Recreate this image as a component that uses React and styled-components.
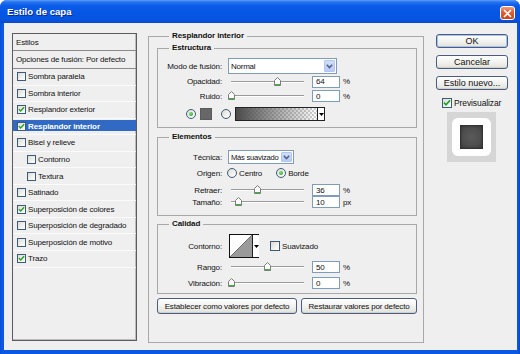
import React from "react";
import styled, { createGlobalStyle } from "styled-components";

const Global = createGlobalStyle`
  html, body { margin: 0; padding: 0; background: #fff; }
  body {
    font-family: "Liberation Sans", Arial, sans-serif;
    font-size: 8px;
    letter-spacing: -0.15px;
    color: #111;
  }
  * { box-sizing: border-box; }
`;

const Window = styled.div`
  width: 520px;
  height: 354px;
  display: flex;
  flex-direction: column;
  background: linear-gradient(90deg, #0a4fd6 0, #0a58e4 2px, #0a58e4 calc(100% - 2px), #0a47c6 100%);
  border-radius: 7px 7px 0 0;
  overflow: hidden;
`;

const TitleBar = styled.div`
  height: 23px;
  flex: none;
  display: flex;
  align-items: center;
  justify-content: space-between;
  padding: 0 5px 0 7px;
  background: linear-gradient(180deg, #5e9ef8 0%, #2673f0 9%, #0a5ce8 25%, #0556e4 55%, #0654e0 85%, #0a48c8 100%);
`;

const Title = styled.span`
  color: #fff;
  font-weight: bold;
  font-size: 9.6px;
  letter-spacing: 0;
  text-shadow: 1px 1px 0 #0a2a8a;
`;

const CloseBtn = styled.div`
  width: 15px;
  height: 14px;
  margin-top: 3px;
  border: 1px solid #fff;
  border-radius: 3px;
  background: linear-gradient(180deg, #ec9f80 0%, #e0603a 40%, #cc4418 100%);
  display: flex;
  align-items: center;
  justify-content: center;
`;

const Frame = styled.div`
  flex: 1;
  margin: 0 3px 4px 4px;
  background: #efefef;
  display: flex;
  align-items: flex-start;
  padding: 10px 0 0 8px;
`;

/* ---------- left list ---------- */
const ListPanel = styled.div`
  width: 125px;
  height: 308px;
  flex: none;
  border: 1px solid #5c5c5c;
  box-shadow: inset -1px -1px 0 #bdbdbd;
  background: #efefef;
  display: flex;
  flex-direction: column;
`;

const ListHeader = styled.div`
  height: ${(p) => p.$h}px;
  flex: none;
  display: flex;
  align-items: center;
  padding-left: 3px;
  border-bottom: 1px solid #8a8a8a;
  white-space: nowrap;
`;

const ListItem = styled.div`
  height: 16.55px;
  flex: none;
  display: flex;
  align-items: center;
  padding-left: ${(p) => (p.$indent ? 14 : 4)}px;
  border-bottom: 1px solid #fbfbfb;
  color: ${(p) => (p.$selected ? "#fff" : "#111")};
  font-weight: ${(p) => (p.$selected ? "bold" : "normal")};
  letter-spacing: ${(p) => (p.$selected ? "-0.1px" : "-0.15px")};
  background: ${(p) =>
    p.$selected
      ? "linear-gradient(180deg, transparent 1px, #316ac5 1px, #316ac5 calc(100% - 3px), transparent calc(100% - 3px))"
      : "transparent"};
`;

const ItemText = styled.span`
  margin-left: ${(p) => p.$ml ?? 1}px;
  white-space: nowrap;
`;

const CheckBox = styled.div`
  width: ${(p) => p.$size}px;
  height: ${(p) => p.$size}px;
  flex: none;
  margin-left: ${(p) => p.$ml || 0}px;
  border: 1px solid #3d5a78;
  background: linear-gradient(135deg, #dcdcd6 0%, #f2f2ee 60%, #ffffff 100%);
  display: flex;
  align-items: center;
  justify-content: center;
`;

const Check = ({ checked, size = 9, ml }) => (
  <CheckBox $size={size} $ml={ml}>
    {checked && (
      <svg width={size - 2} height={size - 2} viewBox="0 0 8 8">
        <polyline points="1,3.6 3,5.8 7,1.4" fill="none" stroke="#21a121" strokeWidth="1.6" />
      </svg>
    )}
  </CheckBox>
);

/* ---------- group boxes ---------- */
const Group = styled.div`
  border: 1px solid #a8a8a8;
  display: flex;
  flex-direction: column;
  flex: none;
  width: ${(p) => (p.$w ? `${p.$w}px` : "auto")};
  height: ${(p) => (p.$h ? `${p.$h}px` : "auto")};
  margin-top: ${(p) => p.$mt || 0}px;
  padding: ${(p) => p.$pad || "0"};
`;

const Legend = styled.div`
  align-self: flex-start;
  height: 10px;
  line-height: 10px;
  margin: -6px 0 0 ${(p) => p.$ml}px;
  padding: 0 3px;
  background: #efefef;
  font-weight: bold;
  letter-spacing: -0.1px;
  color: #111;
`;

const Row = styled.div`
  display: flex;
  align-items: center;
  height: ${(p) => p.$h}px;
  margin-top: ${(p) => p.$mt || 0}px;
  padding-left: ${(p) => p.$pl || 0}px;
  flex: none;
`;

const Label = styled.span`
  width: 64px;
  flex: none;
  text-align: right;
  white-space: nowrap;
`;

const SelectBox = styled.div`
  width: ${(p) => p.$w}px;
  height: ${(p) => p.$h}px;
  margin-left: 6px;
  flex: none;
  border: 1px solid #7f9db9;
  background: #fff;
  display: flex;
  align-items: center;
  justify-content: space-between;
  padding-left: 2px;
`;

const SelectText = styled.span`
  white-space: nowrap;
  font-size: ${(p) => p.$fs || 8}px;
  letter-spacing: -0.25px;
`;

const ArrowBtn = styled.div`
  width: 11px;
  flex: none;
  align-self: stretch;
  margin: 1px;
  border-radius: 1px;
  background: linear-gradient(180deg, #d2def9 0%, #b9cbf5 100%);
  border: 1px solid #b3c5ef;
  display: flex;
  align-items: center;
  justify-content: center;
`;

const Select = ({ value, w, h, fs }) => (
  <SelectBox $w={w} $h={h}>
    <SelectText $fs={fs}>{value}</SelectText>
    <ArrowBtn>
      <svg width="7" height="5" viewBox="0 0 7 5">
        <polyline points="0.8,0.8 3.5,3.6 6.2,0.8" fill="none" stroke="#4d6185" strokeWidth="1.5" />
      </svg>
    </ArrowBtn>
  </SelectBox>
);

const SliderBox = styled.div`
  position: relative;
  width: 73px;
  height: 12px;
  flex: none;
  margin: 0 8px 0 9px;
  &::before {
    content: "";
    position: absolute;
    left: 0;
    right: 0;
    top: 5px;
    height: 1px;
    background: #9a9a9a;
    box-shadow: 0 1px 0 #fff;
  }
`;

const Thumb = styled.svg`
  position: absolute;
  top: 1px;
`;

const Slider = ({ pct }) => (
  <SliderBox>
    <Thumb width="7" height="9" viewBox="0 0 7 9" style={{ left: `calc(${pct}% - 3.5px)` }}>
      <path d="M3.5 0.5 L6.5 3.5 L6.5 8.5 L0.5 8.5 L0.5 3.5 Z" fill="#fbfbfb" stroke="#7c7c7c" strokeWidth="1" />
      <line x1="1" y1="7.5" x2="6" y2="7.5" stroke="#3cb43c" strokeWidth="1" />
    </Thumb>
  </SliderBox>
);

const NumInput = styled.div`
  width: 28px;
  height: 12px;
  flex: none;
  border: 1px solid #7f9db9;
  background: #fff;
  padding-left: 3px;
  display: flex;
  align-items: center;
`;

const Unit = styled.span`
  margin-left: 3px;
`;

const RadioCircle = styled.div`
  width: 10px;
  height: 10px;
  flex: none;
  margin-left: ${(p) => p.$ml || 0}px;
  border-radius: 50%;
  border: 1px solid #3d5a78;
  background: linear-gradient(135deg, #dcdcd6 0%, #f3f3ef 60%, #fff 100%);
  display: flex;
  align-items: center;
  justify-content: center;
  &::after {
    content: "";
    display: ${(p) => (p.$on ? "block" : "none")};
    width: 4px;
    height: 4px;
    border-radius: 50%;
    background: radial-gradient(circle at 35% 35%, #7fe07f, #1c9a1c);
  }
`;

const Swatch = styled.div`
  width: 12px;
  height: 12px;
  flex: none;
  margin-left: 4px;
  background: #676767;
  border: 1px solid #5a5a5a;
`;

const GradBox = styled.div`
  width: 90px;
  height: 14px;
  flex: none;
  margin-left: 4px;
  border: 1px solid #222;
  display: flex;
`;

const GradFill = styled.div`
  flex: 1;
  background: linear-gradient(90deg, #4a4a4a 0%, rgba(90, 90, 90, 0.6) 45%, rgba(120, 120, 120, 0) 100%),
    repeating-conic-gradient(#cfcfcf 0 25%, #ffffff 0 50%) 0 0 / 4px 4px;
`;

const MiniArrow = styled.div`
  width: 7px;
  flex: none;
  border-left: 1px solid #222;
  background: #fff;
  display: flex;
  align-items: center;
  justify-content: center;
`;

const ArrowDown = () => (
  <svg width="5" height="3" viewBox="0 0 5 3">
    <polygon points="0,0 5,0 2.5,3" fill="#000" />
  </svg>
);

const ContourBox = styled.div`
  width: 30px;
  height: 24px;
  flex: none;
  margin-left: 7px;
  border: 1px solid #111;
  background: #fff;
  display: flex;
`;

const ContourPreview = styled.svg`
  flex: none;
`;

const PlainBtn = styled.div`
  height: ${(p) => p.$h || 16}px;
  width: ${(p) => p.$w}px;
  flex: none;
  margin-left: ${(p) => p.$ml || 0}px;
  margin-top: ${(p) => p.$mt || 0}px;
  border: 1px solid #4a5d80;
  border-radius: 3px;
  background: linear-gradient(180deg, #ffffff 0%, #f3f3f1 45%, #e2e2dc 100%);
  box-shadow: ${(p) => (p.$primary ? "inset 0 0 0 1px #a9c3ef" : "inset 0 -1px 0 #d0d0c8")};
  display: flex;
  align-items: center;
  justify-content: center;
  font-size: ${(p) => p.$fs || 8}px;
  letter-spacing: ${(p) => (p.$fs ? "0" : "-0.15px")};
  white-space: nowrap;
`;

const RightCol = styled.div`
  width: 72px;
  flex: none;
  margin: 1px 0 0 12px;
  display: flex;
  flex-direction: column;
`;

const PreviewRow = styled.div`
  display: flex;
  align-items: center;
  height: 11px;
  margin: 7px 0 0 6px;
  font-size: 8.5px;
  letter-spacing: -0.1px;
`;

const PreviewFrame = styled.div`
  width: 49px;
  height: 50px;
  margin: 4px 0 0 11px;
  background: #d6d6d6;
  display: flex;
  align-items: center;
  justify-content: center;
`;

const PreviewTile = styled.div`
  width: 39px;
  height: 38px;
  border-radius: 6px;
  background: #fff;
  display: flex;
  align-items: center;
  justify-content: center;
`;

const PreviewLayer = styled.div`
  width: 23px;
  height: 24px;
  background: radial-gradient(circle, #5a5a5a 0%, #4e4e4e 55%, #3a3a3a 100%);
  box-shadow: inset 0 0 2px 1px #2e2e2e;
`;

const MainCol = styled.div`
  margin: 3px 0 0 11px;
  flex: none;
`;

const listItems = [
  { label: "Sombra paralela" },
  { label: "Sombra interior" },
  { label: "Resplandor exterior", checked: true },
  { label: "Resplandor interior", checked: true, selected: true },
  { label: "Bisel y relieve" },
  { label: "Contorno", indent: true },
  { label: "Textura", indent: true },
  { label: "Satinado" },
  { label: "Superposición de colores", checked: true },
  { label: "Superposición de degradado" },
  { label: "Superposición de motivo" },
  { label: "Trazo", checked: true },
];

const SliderRow = ({ label, pct, value, unit, h, mt }) => (
  <Row $h={h} $mt={mt}>
    <Label>{label}</Label>
    <Slider pct={pct} />
    <NumInput>{value}</NumInput>
    <Unit>{unit}</Unit>
  </Row>
);

export default function App() {
  return (
    <>
      <Global />
      <Window>
        <TitleBar>
          <Title>Estilo de capa</Title>
          <CloseBtn>
            <svg width="9" height="9" viewBox="0 0 9 9">
              <path d="M1.5 1.5 L7.5 7.5 M7.5 1.5 L1.5 7.5" stroke="#fff" strokeWidth="1.7" strokeLinecap="round" />
            </svg>
          </CloseBtn>
        </TitleBar>
        <Frame>
          <ListPanel>
            <ListHeader $h={17}>Estilos</ListHeader>
            <ListHeader $h={18}>Opciones de fusión: Por defecto</ListHeader>
            {listItems.map((it) => (
              <ListItem key={it.label} $indent={it.indent} $selected={it.selected}>
                <Check checked={it.checked} size={9} />
                <ItemText $ml={2}>{it.label}</ItemText>
              </ListItem>
            ))}
          </ListPanel>

          <MainCol>
            <Group $w={276} $h={307} $pad="0 6px 0 8px">
              <Legend $ml={12}>Resplandor interior</Legend>

              <Group $mt={7} $pad="0 0 5px 0">
                <Legend $ml={11}>Estructura</Legend>
                <Row $h={16} $mt={5}>
                  <Label>Modo de fusión:</Label>
                  <Select value="Normal" w={109} h={16} />
                </Row>
                <SliderRow label="Opacidad:" pct={64} value="64" unit="%" h={15} />
                <SliderRow label="Ruido:" pct={0} value="0" unit="%" h={14} />
                <Row $h={16} $mt={3} $pl={28}>
                  <RadioCircle $on />
                  <Swatch />
                  <RadioCircle $ml={9} />
                  <GradBox>
                    <GradFill />
                    <MiniArrow>
                      <ArrowDown />
                    </MiniArrow>
                  </GradBox>
                </Row>
              </Group>

              <Group $mt={9} $pad="0 0 7px 0">
                <Legend $ml={11}>Elementos</Legend>
                <Row $h={14} $mt={8}>
                  <Label>Técnica:</Label>
                  <Select value="Más suavizado" w={66} h={14} fs={7.6} />
                </Row>
                <Row $h={18}>
                  <Label>Origen:</Label>
                  <RadioCircle $ml={5} />
                  <ItemText $ml={2}>Centro</ItemText>
                  <RadioCircle $ml={14} $on />
                  <ItemText $ml={2}>Borde</ItemText>
                </Row>
                <SliderRow label="Retraer:" pct={36} value="36" unit="%" h={12} mt={2} />
                <SliderRow label="Tamaño:" pct={10} value="10" unit="px" h={12} />
              </Group>

              <Group $mt={8} $pad="0 0 4px 0">
                <Legend $ml={11}>Calidad</Legend>
                <Row $h={24} $mt={5}>
                  <Label>Contorno:</Label>
                  <ContourBox>
                    <ContourPreview width="22" height="22" viewBox="0 0 22 22">
                      <polygon points="0,22 22,0 22,22" fill="#9a9a9a" />
                      <line x1="0" y1="22" x2="22" y2="0" stroke="#555" strokeWidth="0.8" />
                    </ContourPreview>
                    <MiniArrow>
                      <ArrowDown />
                    </MiniArrow>
                  </ContourBox>
                  <CheckBox $size={10} $ml={11} />
                  <ItemText $ml={2}>Suavizado</ItemText>
                </Row>
                <SliderRow label="Rango:" pct={50} value="50" unit="%" h={12} mt={3} />
                <SliderRow label="Vibración:" pct={0} value="0" unit="%" h={12} mt={4} />
              </Group>

              <Row $h={16} $mt={4}>
                <PlainBtn $w={140}>Establecer como valores por defecto</PlainBtn>
                <PlainBtn $w={116} $ml={4}>Restaurar valores por defecto</PlainBtn>
              </Row>
            </Group>
          </MainCol>

          <RightCol>
            <PlainBtn $w={72} $h={14} $fs={9} $primary>OK</PlainBtn>
            <PlainBtn $w={72} $h={14} $fs={9} $mt={7}>Cancelar</PlainBtn>
            <PlainBtn $w={72} $h={14} $fs={9} $mt={7}>Estilo nuevo...</PlainBtn>
            <PreviewRow>
              <Check checked size={10} />
              <ItemText $ml={2}>Previsualizar</ItemText>
            </PreviewRow>
            <PreviewFrame>
              <PreviewTile>
                <PreviewLayer />
              </PreviewTile>
            </PreviewFrame>
          </RightCol>
        </Frame>
      </Window>
    </>
  );
}
